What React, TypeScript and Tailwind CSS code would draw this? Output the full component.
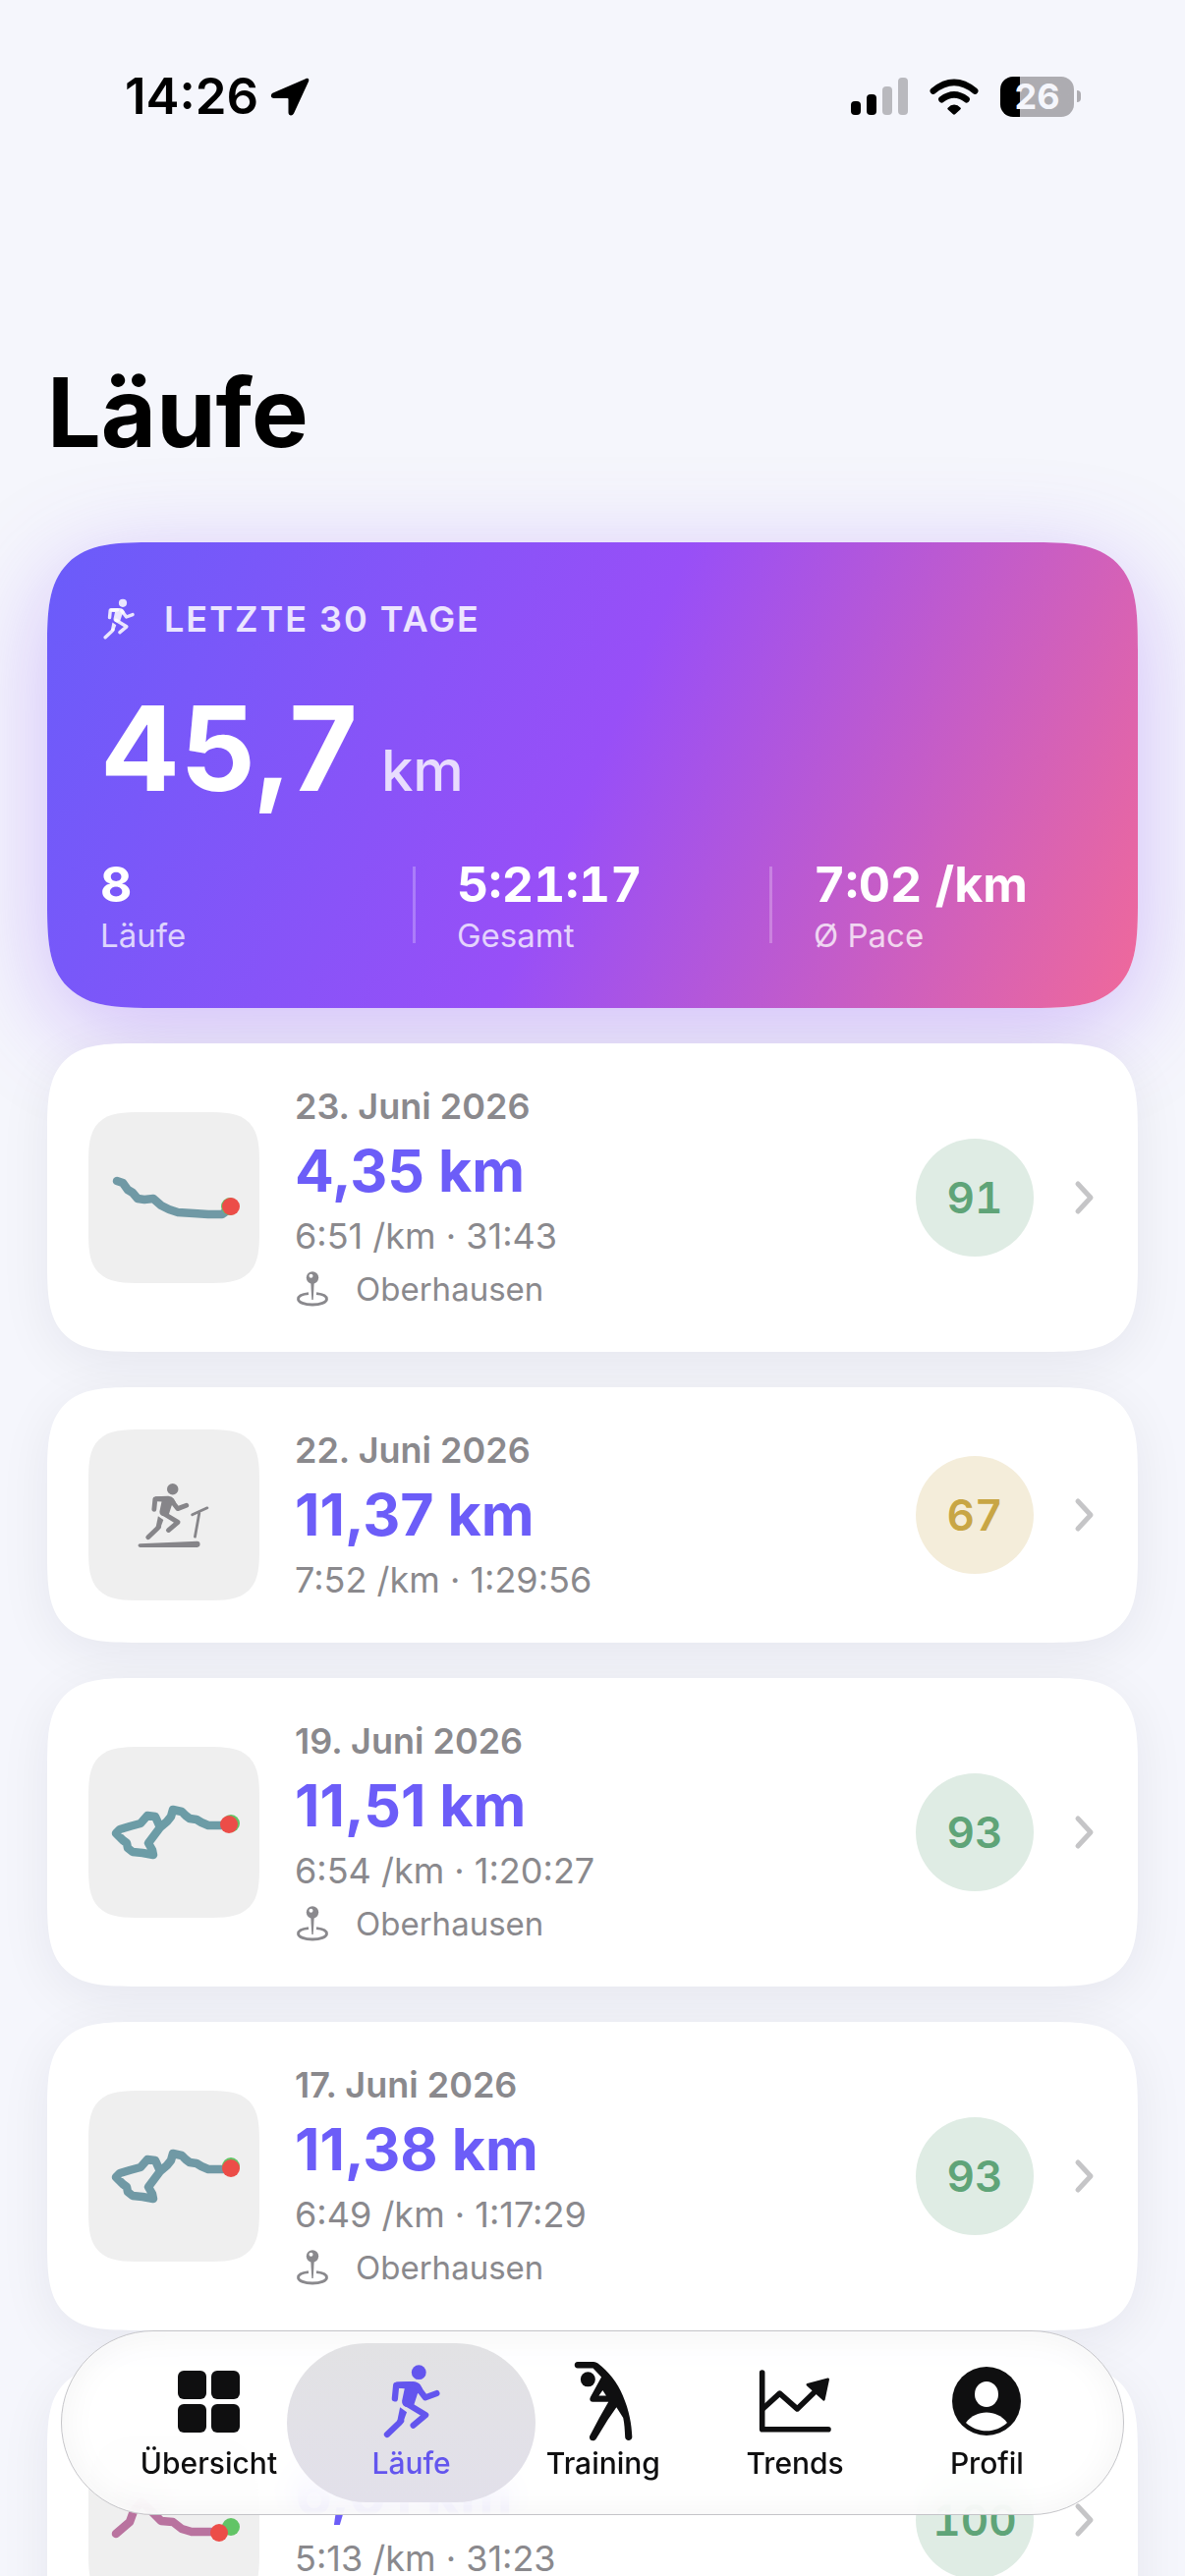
import type { ReactNode } from 'react'
import clsx from 'clsx'

type Tone = 'green' | 'yellow'

interface Route {
    points: string
    color: string
    start: [number, number]
    end: [number, number]
}

interface Run {
    date: string
    distance: string
    pace: string
    duration: string
    location?: string
    score: number
    tone: Tone
    route?: Route
}

const LOOP =
    '143,80 122,80 115,77 110,74 103,73 99,70 95,66 86,64 84,71 80,76 73,82 68,71 60,70 53,78 42,81 32,84 28,88 35,95 39,98 40,103 45,107 55,108 66,110 65,105 61,98 73,82'

const runs: Run[] = [
    {
        date: '23. Juni 2026',
        distance: '4,35 km',
        pace: '6:51 /km',
        duration: '31:43',
        location: 'Oberhausen',
        score: 91,
        tone: 'green',
        route: {
            points: '29,70 35,72 40,79 45,82 50,88 57,89 66,88 74,95 82,99 91,102 107,103 122,104 136,104 143,99',
            color: '#7099a5',
            start: [144, 96],
            end: [145, 96],
        },
    },
    {
        date: '22. Juni 2026',
        distance: '11,37 km',
        pace: '7:52 /km',
        duration: '1:29:56',
        score: 67,
        tone: 'yellow',
    },
    {
        date: '19. Juni 2026',
        distance: '11,51 km',
        pace: '6:54 /km',
        duration: '1:20:27',
        location: 'Oberhausen',
        score: 93,
        tone: 'green',
        route: { points: LOOP, color: '#6c9ca6', start: [145, 78], end: [143, 79] },
    },
    {
        date: '17. Juni 2026',
        distance: '11,38 km',
        pace: '6:49 /km',
        duration: '1:17:29',
        location: 'Oberhausen',
        score: 93,
        tone: 'green',
        route: { points: LOOP, color: '#7099a5', start: [145, 77], end: [145, 79] },
    },
    {
        date: '15. Juni 2026',
        distance: '6,01 km',
        pace: '5:13 /km',
        duration: '31:23',
        location: 'Oberhausen',
        score: 100,
        tone: 'green',
        route: {
            points: '28,101 42,89 46,78 54,68 65,79 74,88 86,89 95,96 105,99 126,99',
            color: '#b9739f',
            start: [145, 94],
            end: [133, 100],
        },
    },
]

const stats = [
    { value: '8', label: 'Läufe' },
    { value: '5:21:17', label: 'Gesamt' },
    { value: '7:02 /km', label: 'Ø Pace' },
]

function RunnerShape() {
    return (
        <>
            <circle cx="110" cy="26" r="22.5" fill="currentColor" />
            <path
                d="M40 56 L92 54 Q106 54 115 65 L122 78 L106 92 L95 126 L78 134 Q56 132 58 114 L66 76 L40 74Z"
                fill="currentColor"
            />
            <g fill="none" stroke="currentColor" strokeWidth="19" strokeLinecap="round" strokeLinejoin="round">
                <path d="M36 107 L40 66 L80 64" />
                <path d="M104 70 L130 104 L165 91" />
                <path d="M72 122 L131 158 L93 190" />
                <path d="M55 176 L50 182 L12 218" />
            </g>
            <path d="M52 134 L73 149 L60 184 L43 178Z" fill="currentColor" />
        </>
    )
}

function RunnerIcon({ className }: { className?: string }) {
    return (
        <svg viewBox="0 0 176 230" className={className} aria-hidden="true">
            <RunnerShape />
        </svg>
    )
}

function TreadmillIcon() {
    return (
        <svg viewBox="-30 0 290 262" className="h-[67px] w-[74px] text-[#868589]" aria-hidden="true">
            <RunnerShape />
            <path d="M-20 244 L208 234 Q219 234 219 246 Q219 258 208 258 L-20 258 Q-28 257 -28 251 Q-28 245 -20 244Z" fill="currentColor" />
            <g fill="none" stroke="currentColor" strokeWidth="11" strokeLinecap="round">
                <path d="M248 101 L188 128" />
                <path d="M216 122 L199 216" />
            </g>
        </svg>
    )
}

function StretchIcon() {
    return (
        <svg viewBox="0 0 184 250" className="h-[82px] w-[60px]" aria-hidden="true">
            <circle cx="44" cy="57" r="23" fill="currentColor" />
            <path
                fill="currentColor"
                fillRule="evenodd"
                d="M12 2 H62 Q69 2 75 7 C108 32 136 66 153 108 C173 155 180 195 182 237 C182 251 160 251 160 237 C159 215 158 195 154 177 L133 144 L106 183 L70 242 C62 255 44 246 50 233 L80 176 L108 127 H59 C50 127 48 119 52 112 L86 50 L60 22 H12 C-1 22 -1 2 12 2Z M90 91 L78 108 H101Z"
            />
        </svg>
    )
}

function TrendsIcon() {
    return (
        <svg viewBox="0 0 230 200" className="h-[66px] w-[76px]" aria-hidden="true">
            <g fill="none" stroke="currentColor" strokeWidth="17" strokeLinecap="round" strokeLinejoin="round">
                <path d="M14 12 V187 H218" />
                <path d="M18 122 L68 76 L122 124 L182 66" />
            </g>
            <path
                d="M154 49 L217 33 L204 95Z"
                fill="currentColor"
                stroke="currentColor"
                strokeWidth="8"
                strokeLinejoin="round"
            />
        </svg>
    )
}

function GridIcon() {
    return (
        <svg viewBox="0 0 63 63" className="h-[63px] w-[63px]" fill="currentColor" aria-hidden="true">
            <rect width="29" height="29" rx="6" />
            <rect x="34" width="29" height="29" rx="6" />
            <rect y="34" width="29" height="29" rx="6" />
            <rect x="34" y="34" width="29" height="29" rx="6" />
        </svg>
    )
}

function ProfileIcon() {
    return (
        <svg viewBox="0 0 70 70" className="h-[70px] w-[70px]" aria-hidden="true">
            <circle cx="35" cy="35" r="35" fill="currentColor" />
            <ellipse cx="35" cy="28" rx="12" ry="13" fill="white" />
            <path d="M14 57 C19 50 27 46.500 35 46.500 S51 50 56 57 C50 62.500 43 65.300 35 65.300 S20 62.500 14 57Z" fill="white" />
        </svg>
    )
}

function PinIcon() {
    return (
        <svg viewBox="-2 0 36 36" className="h-9 w-9" aria-hidden="true">
            <circle cx="16" cy="6.500" r="6.200" fill="currentColor" />
            <circle cx="14.500" cy="4.800" r="2" fill="white" />
            <path d="M14.300 12 H17.700 L16.700 29 H15.300Z" fill="currentColor" />
            <path
                d="M12 22.600 C5 23.300 1.500 25.500 1.500 28.200 C1.500 31.600 8 34 16 34 S30.500 31.600 30.500 28.200 C30.500 25.500 27 23.300 20 22.600"
                fill="none"
                stroke="currentColor"
                strokeWidth="2.800"
            />
        </svg>
    )
}

function RouteMap({ route }: { route: Route }) {
    return (
        <svg viewBox="0 0 174 174" className="h-full w-full" aria-hidden="true">
            <polyline
                points={route.points}
                fill="none"
                stroke={route.color}
                strokeWidth="8.500"
                strokeLinecap="round"
                strokeLinejoin="round"
            />
            <circle cx={route.start[0]} cy={route.start[1]} r="9" fill="#62c466" />
            <circle cx={route.end[0]} cy={route.end[1]} r="9" fill="#ec4d48" />
        </svg>
    )
}

function StatusBar() {
    return (
        <div className="flex h-[196px] shrink-0 items-center justify-between pr-[106px] pl-[127px]">
            <div className="flex items-center gap-3">
                <span className="text-[51px] leading-[60px] font-semibold">14:26</span>
                <svg viewBox="0 0 40 39" className="h-[39px] w-10" aria-hidden="true">
                    <path d="M36 1.200 L3 15.500 C0 17 0 21 4 21 H17.500 Q18.500 21 18.500 22 V35.500 C18.500 39 22.500 39.500 24 36.500 L39 4 C40 1.500 38.500 .2 36 1.200Z" />
                </svg>
            </div>
            <div className="flex items-center gap-[22px]">
                <svg viewBox="0 0 58 38" className="h-[38px] w-[58px]" aria-hidden="true">
                    <rect y="24" width="10" height="14" rx="4" />
                    <rect x="16" y="17" width="10" height="21" rx="4" />
                    <rect x="32" y="9" width="10" height="29" rx="4" fill="#b9b9be" />
                    <rect x="48" y="0" width="10" height="38" rx="4" fill="#b9b9be" />
                </svg>
                <svg viewBox="0 0 150 112" className="h-[37px] w-[50px]" aria-hidden="true">
                    <g fill="none" stroke="black" strokeWidth="20" strokeLinecap="round">
                        <path d="M11 38 Q75 -14 139 38" />
                        <path d="M37 64 Q75 35 113 64" />
                    </g>
                    <path d="M55 91 Q75 70 96 91 Q96 93 94 95 L79 109 Q75 114 71 109 L56 95 Q54 93 55 91Z" />
                </svg>
                <div className="flex items-center gap-[3px]">
                    <span className="flex h-[41px] w-[75px] items-center justify-center rounded-[13px] bg-linear-to-r from-black from-27% to-[#adacb1] to-27% text-[36px] leading-[41px] font-bold text-[#f5f6fc]">
                        26
                    </span>
                    <span className="h-3 w-1 rounded-r-full bg-[#adacb1]" />
                </div>
            </div>
        </div>
    )
}

function Summary() {
    return (
        <section className="flex flex-col gap-9 rounded-[72px] bg-[linear-gradient(113deg,#6a5cfa_0%,#984ff7_50%,#f0699a_100%)] p-[54px] text-white shadow-[0_24px_100px_rgba(139,77,246,0.34)] supports-[corner-shape:squircle]:rounded-[110px] supports-[corner-shape:squircle]:[corner-shape:superellipse(1.7)]">
            <h2 className="flex h-12 items-center gap-[30px] text-[36px] font-semibold tracking-[2px] text-white/85">
                <RunnerIcon className="ml-[3px] h-[42px] w-8" />
                LETZTE 30 TAGE
            </h2>
            <p className="flex h-36 items-baseline gap-6 text-[120px] leading-[144px] font-bold">
                45,7
                <span className="text-[58px] leading-none font-medium text-white/80">km</span>
            </p>
            <dl className="flex items-center gap-[42px]">
                {stats.map((stat, idx) => (
                    <div key={stat.label} className={clsx('flex items-center gap-[42px]', idx === 0 ? 'flex-[276]' : 'flex-[321]')}>
                        {idx > 0 && <span className="h-[78px] w-[3px] bg-white/25" />}
                        <div className="flex flex-col-reverse gap-[2px]">
                            <dt className="text-[33px] leading-10 text-white/75">{stat.label}</dt>
                            <dd className="text-[50px] leading-[60px] font-bold whitespace-nowrap tabular-nums">{stat.value}</dd>
                        </div>
                    </div>
                ))}
            </dl>
        </section>
    )
}

function RunCard({ run }: { run: Run }) {
    return (
        <a
            href="#lauf"
            className="flex items-center rounded-[60px] bg-white p-[42px] shadow-[0_12px_54px_rgba(20,0,40,0.065)] supports-[corner-shape:squircle]:rounded-[92px] supports-[corner-shape:squircle]:[corner-shape:superellipse(1.7)]"
        >
            <div className="flex h-[174px] w-[174px] shrink-0 items-center justify-center rounded-[36px] bg-[#efefef] supports-[corner-shape:squircle]:rounded-[55px] supports-[corner-shape:squircle]:[corner-shape:superellipse(1.7)]">
                {run.route ? <RouteMap route={run.route} /> : <TreadmillIcon />}
            </div>
            <div className="ml-9 flex flex-1 flex-col gap-[6px] text-[36px] leading-[44px] text-[#8a898d]">
                <p className="font-semibold">{run.date}</p>
                <p className="text-[59px] leading-[76px] font-bold text-[#6c5df8]">{run.distance}</p>
                <p>
                    {run.pace} · {run.duration}
                </p>
                {run.location && (
                    <p className="flex items-center gap-[26px] pt-1 text-[33px]">
                        <PinIcon />
                        {run.location}
                    </p>
                )}
            </div>
            <span
                className={clsx(
                    'flex h-[120px] w-[120px] items-center justify-center rounded-full text-[44px] font-semibold tabular-nums',
                    run.tone === 'green' ? 'bg-[#dfece4] text-[#5fa478]' : 'bg-[#f4edda] text-[#c8a645]'
                )}
            >
                {run.score}
            </span>
            <svg viewBox="0 0 24 36" className="ml-10 h-9 w-6" aria-hidden="true">
                <path d="M5 4 L18 18 L5 32" fill="none" stroke="#c5c5c7" strokeWidth="5" strokeLinecap="round" strokeLinejoin="round" />
            </svg>
        </a>
    )
}

const tabs: { label: string; icon: ReactNode }[] = [
    { label: 'Übersicht', icon: <GridIcon /> },
    { label: 'Läufe', icon: <RunnerIcon className="h-[76px] w-[58px]" /> },
    { label: 'Training', icon: <StretchIcon /> },
    { label: 'Trends', icon: <TrendsIcon /> },
    { label: 'Profil', icon: <ProfileIcon /> },
]

function TabBar() {
    const active = 'Läufe'

    return (
        <nav className="absolute inset-x-[62px] bottom-[62px] flex h-[188px] rounded-full border border-[#c4c4c8] bg-white/90 px-[41px] py-3 shadow-[inset_0_0_36px_rgba(0,0,0,0.05),inset_0_0_4px_2px_white] backdrop-blur-lg">
            {tabs.map((tab, idx) => (
                <a
                    key={tab.label}
                    href={`#${tab.label.toLowerCase()}`}
                    aria-current={tab.label === active ? 'page' : undefined}
                    className={clsx(
                        'relative flex basis-0 flex-col items-center text-[30px] leading-9 font-medium',
                        idx === 0 ? 'grow-[10]' : 'grow-[9]',
                        tab.label === active ? 'text-[#6355ee]' : 'text-[#0f0f10]'
                    )}
                >
                    {tab.label === active && (
                        <span className="absolute -inset-x-[29px] inset-y-0 rounded-full bg-linear-to-b from-[#e2e2e4] to-[#e2e0ea]" />
                    )}
                    <span className="relative mt-4 flex h-[86px] items-center">{tab.icon}</span>
                    <span className="relative mt-[2px]">{tab.label}</span>
                </a>
            ))}
        </nav>
    )
}

export default function App() {
    return (
        <div className="relative flex h-dvh flex-col overflow-hidden bg-[#f5f6fc] font-['Inter',sans-serif] text-black">
            <StatusBar />
            <main className="min-h-0 flex-1 overflow-hidden px-12 pt-[164px]">
                <h1 className="text-[97px] leading-[120px] font-bold">Läufe</h1>
                <div className="mt-[72px] flex flex-col gap-9 pb-72">
                    <Summary />
                    {runs.map((run) => (
                        <RunCard key={run.date} run={run} />
                    ))}
                </div>
            </main>
            <TabBar />
        </div>
    )
}
